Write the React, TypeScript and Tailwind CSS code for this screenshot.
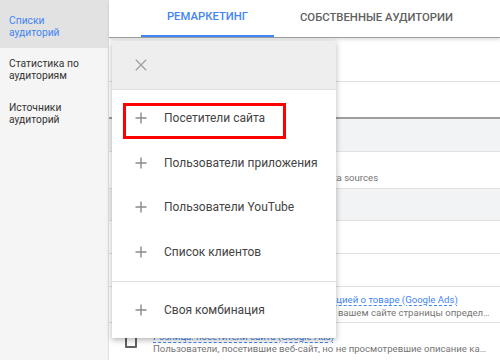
import React from "react";

function Plus() {
  return (
    <svg width="12" height="12" viewBox="0 0 12 12" className="shrink-0">
      <path d="M6 0.5V11.5M0.5 6H11.5" stroke="#8a8a8a" strokeWidth="1.4" fill="none" />
    </svg>
  );
}

function Close() {
  return (
    <svg width="12" height="12" viewBox="0 0 12 12">
      <path d="M0.8 0.8L11.2 11.2M11.2 0.8L0.8 11.2" stroke="#a0a0a0" strokeWidth="1.3" fill="none" />
    </svg>
  );
}

function MenuItem({ label, boxed }: { label: string; boxed?: boolean }) {
  return (
    <div className="relative h-[44.5px] flex items-center pl-[23px]">
      <Plus />
      <span className="ml-[17px] text-[12px] text-[#444444]">{label}</span>
      {boxed && (
        <div className="absolute left-[11px] top-[7px] w-[163px] h-[36px] border-[3px] border-[#ff0000]" />
      )}
    </div>
  );
}

export default function App() {
  return (
    <div
      className="relative w-[500px] h-[360px] overflow-hidden flex bg-white"
      style={{ fontFamily: "Roboto, 'Noto Sans', sans-serif" }}
    >
      {/* Sidebar */}
      <div className="w-[109px] shrink-0 bg-[#f5f5f5] border-r border-[#e0e0e0] flex flex-col text-[10.3px] leading-[12px]">
        <div className="h-[48px] bg-[#e2e2e2] pt-[15px] pl-[9px] text-[#4285f4]">
          Списки
          <br />
          аудиторий
        </div>
        <div className="h-[44px] pt-[10px] pl-[9px] text-[#333333]">
          Статистика по
          <br />
          аудиториям
        </div>
        <div className="h-[44px] pt-[10px] pl-[9px] text-[#333333]">
          Источники
          <br />
          аудиторий
        </div>
      </div>

      {/* Main */}
      <div className="flex-1 flex flex-col min-w-0">
        <div className="h-[38px] shrink-0 border-b border-[#9e9e9e] flex pl-[32px] shadow-[0_2px_3px_rgba(0,0,0,0.12)] relative z-10 bg-white">
          <div className="w-[133px] h-[37px] flex items-center justify-center border-b-2 border-[#4285f4] text-[11.3px] font-medium text-[#4285f4]">
            РЕМАРКЕТИНГ
          </div>
          <div className="h-[37px] px-[26px] flex items-center text-[11.3px] font-medium text-[#616161]">
            СОБСТВЕННЫЕ АУДИТОРИИ
          </div>
        </div>
        <div className="h-[44px] shrink-0 border-b border-[#e0e0e0]" />
        <div className="h-[37px] shrink-0 border-b-2 border-[#9e9e9e]" />
        <div className="h-[33px] shrink-0 bg-[#f1f3f4] border-b border-[#e0e0e0]" />
        <div className="h-[37px] shrink-0 border-b border-[#e0e0e0] pl-[44px] pt-[6px] text-[9.6px] leading-[13px] text-[#757575] whitespace-nowrap">
          <div className="text-[#4285f4]">Google Analytics</div>
          <div>Списки созданные в Google Analytics data sources</div>
        </div>
        <div className="h-[32px] shrink-0 bg-[#f1f3f4] border-b border-[#e0e0e0]" />
        <div className="h-[33px] shrink-0 border-b border-[#e0e0e0]" />
        <div className="h-[33px] shrink-0 border-b border-[#e0e0e0]" />
        <div className="h-[36px] shrink-0 border-b border-[#e0e0e0] pl-[44px] pr-[10px] pt-[6px] text-[9.6px] leading-[13px] whitespace-nowrap">
          <div className="text-[#4285f4] underline decoration-dashed underline-offset-2">
            Посетители сайта с подробной информацией о товаре (Google Ads)
          </div>
          <div className="text-[#757575] truncate">
            Пользователи, которые просмотрели на вашем сайте страницы определенных товаров
          </div>
        </div>
        <div className="flex-1 flex items-start pt-[8px] text-[9.6px] leading-[12px] whitespace-nowrap min-w-0">
          <div className="pl-[16px] pr-[16px] pt-[5px]">
            <div className="w-[12px] h-[12px] border-2 border-[#616161] rounded-[1px]" />
          </div>
          <div className="min-w-0 pr-[10px]">
            <div className="text-[#4285f4] underline decoration-dashed underline-offset-2">
              Розница: посетители сайта (Google Ads)
            </div>
            <div className="text-[#757575] truncate">
              Пользователи, посетившие веб-сайт, но не просмотревшие описание какого-либо товара
            </div>
          </div>
        </div>
      </div>

      {/* Dropdown menu overlay */}
      <div className="absolute left-[112px] top-[41px] w-[224px] bg-white z-20 shadow-[0_2px_6px_rgba(0,0,0,0.3)] flex flex-col">
        <div className="h-[49px] bg-[#eeeeee] border-b border-[#e0e0e0] flex items-center pl-[23px]">
          <Close />
        </div>
        <div className="pt-[6px] pb-[6.5px] border-b border-[#e0e0e0]">
          <MenuItem label="Посетители сайта" boxed />
          <MenuItem label="Пользователи приложения" />
          <MenuItem label="Пользователи YouTube" />
          <MenuItem label="Список клиентов" />
        </div>
        <div className="pt-[6.5px] pb-[5px]">
          <MenuItem label="Своя комбинация" />
        </div>
      </div>
    </div>
  );
}
